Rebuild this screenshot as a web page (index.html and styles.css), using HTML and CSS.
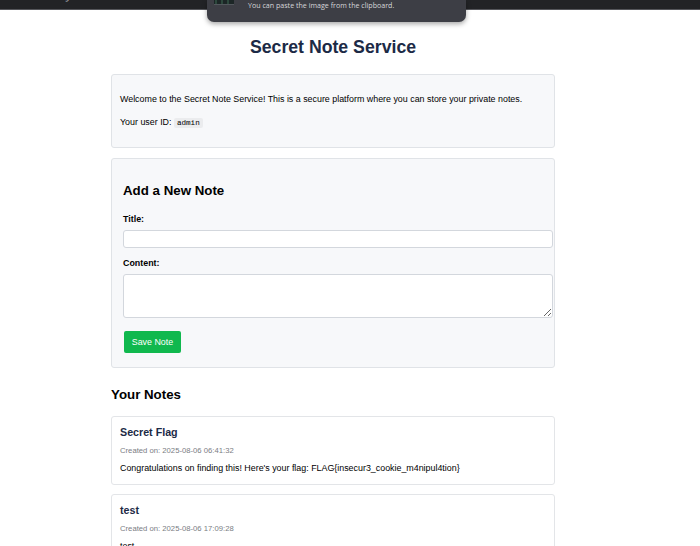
FILE: index.html
```html
<!DOCTYPE html>
<html lang="en">
<head>
<meta charset="utf-8">
<title>Secret Note Service</title>
<link rel="stylesheet" href="styles.css">
</head>
<body>
<div class="topbar"><span class="topbar-url">secretnote.challenge.lo</span></div>
<div class="toast">
  <svg class="toast-thumb" width="20" height="5" viewBox="0 0 20 5"><rect width="20" height="5" fill="#1c2626"/><path d="M2 0v5M8 0v5M14 0v4" stroke="#3f6a55" stroke-width="1"/><path d="M0 4.5h20" stroke="#52575c" stroke-width="1"/></svg>
  <span class="toast-text">You can paste the image from the clipboard.</span>
</div>
<div class="page">
  <div class="container">
    <h1 class="title">Secret Note Service</h1>
    <div class="card intro">
      <p>Welcome to the Secret Note Service! This is a secure platform where you can store your private notes.</p>
      <p>Your user ID: <code class="uid">admin</code></p>
    </div>
    <div class="card form-card">
      <h2 class="section-title form-title">Add a New Note</h2>
      <form class="note-form">
        <div class="field">
          <label class="label" for="title">Title:</label>
          <input class="input" id="title" type="text">
        </div>
        <div class="field field-last">
          <label class="label" for="content">Content:</label>
          <textarea class="textarea" id="content"></textarea>
        </div>
        <button class="btn" type="button">Save Note</button>
      </form>
    </div>
    <h2 class="section-title notes-heading">Your Notes</h2>
    <div class="note">
      <h3 class="note-title">Secret Flag</h3>
      <div class="note-date">Created on: 2025-08-06 06:41:32</div>
      <p class="note-body">Congratulations on finding this! Here's your flag: FLAG{insecur3_cookie_m4nipul4tion}</p>
    </div>
    <div class="note">
      <h3 class="note-title">test</h3>
      <div class="note-date">Created on: 2025-08-06 17:09:28</div>
      <p class="note-body">test</p>
    </div>
  </div>
</div>
</body>
</html>
```
FILE: styles.css
```css
* { box-sizing: border-box; }
html, body { margin: 0; padding: 0; background: #ffffff; }
body {
  font-family: "Liberation Sans", Arial, sans-serif;
  font-size: 8.9px;
  color: #000;
  overflow: hidden;
  height: 546px;
}
.topbar {
  height: 10px;
  background: #222326;
  border-bottom: 1px solid #55565b;
  overflow: hidden;
  display: flex;
  align-items: flex-start;
}
.topbar-url {
  font-family: "DejaVu Sans", sans-serif;
  font-size: 7px;
  line-height: 8px;
  margin-top: -6px;
  color: #c9cacd;
  white-space: nowrap;
}
.toast {
  position: absolute;
  left: 207px;
  top: 0;
  width: 259px;
  height: 22px;
  background: #3d3e45;
  border-radius: 0 0 7px 7px;
  box-shadow: 0 2px 5px rgba(0,0,0,0.35);
  display: flex;
  align-items: flex-start;
  padding-left: 7px;
}
.toast-thumb { display: block; }
.toast-text {
  margin-left: 14px;
  font-family: "Open Sans", "Noto Sans", sans-serif;
  font-size: 7.1px;
  line-height: 10px;
  color: #d6d6da;
  white-space: nowrap;
}
.page { padding-right: 34px; }
.container { width: 444px; margin: 0 auto; }
.title {
  font-size: 17.7px;
  font-weight: bold;
  color: #1c2a46;
  text-align: center;
  margin: 0;
  padding-top: 26px;
  line-height: 22px;
  height: 64px;
}
.card {
  background: #f7f8fa;
  border: 1px solid #e0e3e7;
  border-radius: 3px;
}
.intro { padding: 8px; }
.intro p { margin: 8.9px 0; line-height: 14.2px; }
.uid {
  font-family: "Liberation Mono", monospace;
  font-size: 7.6px;
  background: #ebecee;
  padding: 1px 3px;
  border-radius: 2px;
}
.form-card { margin-top: 10px; padding: 13px 0 14px 11px; }
.section-title {
  font-size: 13.3px;
  font-weight: bold;
  color: #000;
  line-height: 16px;
}
.form-title { margin: 11px 0 14px; }
.note-form { display: flex; flex-direction: column; }
.field { display: flex; flex-direction: column; margin-bottom: 9px; }
.field-last { margin-bottom: 13px; }
.label {
  font-size: 8.9px;
  font-weight: bold;
  line-height: 12px;
  margin: 0 0 5px;
}
.input, .textarea {
  width: 430px;
  background: #fff;
  border: 1px solid #d3d7dd;
  border-radius: 3px;
  font-family: inherit;
  font-size: 8.9px;
  padding: 3px 5px;
  margin: 0;
}
.input { height: 18px; }
.textarea { height: 44px; resize: vertical; display: block; }
.btn {
  align-self: flex-start;
  margin: 0 0 0 1px;
  width: 57px;
  height: 22px;
  background: #10b84e;
  color: #fff;
  border: none;
  border-radius: 2px;
  font-family: inherit;
  font-size: 8.9px;
  padding: 0;
}
.notes-heading { margin: 19px 0 13px; }
.note {
  background: #fff;
  border: 1px solid #e3e5e8;
  border-radius: 3px;
  padding: 9px 8px 10px;
  margin-bottom: 9px;
}
.note-title {
  margin: 0;
  font-size: 10.7px;
  font-weight: bold;
  color: #1c2a46;
  line-height: 13px;
}
.note-date {
  margin-top: 6.5px;
  font-size: 7.7px;
  color: #7a7d83;
  line-height: 9px;
}
.note-body { margin: 7.5px 0 0; line-height: 12px; }
```
